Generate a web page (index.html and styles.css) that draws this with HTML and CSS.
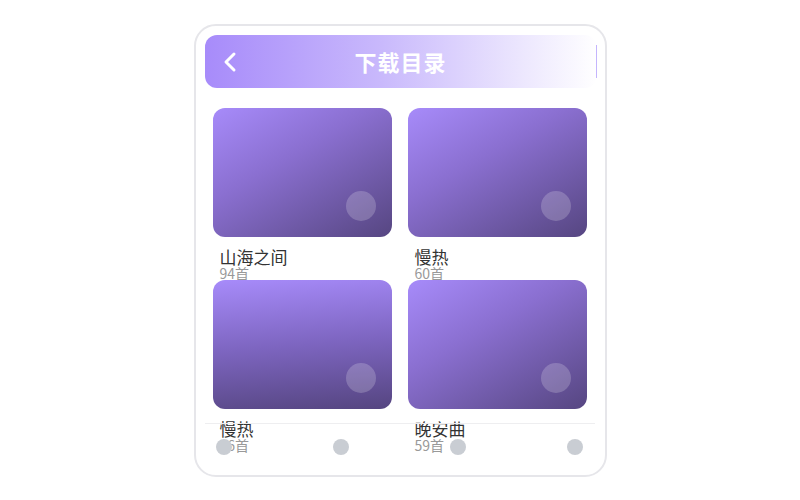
FILE: index.html
```html
<!DOCTYPE html>
<html lang="zh">
<head>
  <meta charset="UTF-8">
  <meta name="viewport" content="width=device-width, initial-scale=1">
  <title>下载目录</title>
  <link rel="stylesheet" href="styles.css">
</head>
<body>

  <div class="phone">
    <div class="header">
      <svg class="back" width="16" height="22" viewBox="0 0 16 22">
        <path d="M12 3 L4 11 L12 19" fill="none" stroke="#fff" stroke-width="3" stroke-linecap="round" stroke-linejoin="round"/>
      </svg>
      <h1>下载目录</h1>
      <span class="edge"></span>
    </div>

    <div class="albums">
      <div class="album">
        <div class="cover"><span class="play"></span></div>
        <div class="name">山海之间</div>
        <div class="count">94首</div>
      </div>
      <div class="album">
        <div class="cover"><span class="play"></span></div>
        <div class="name">慢热</div>
        <div class="count">60首</div>
      </div>
      <div class="album">
        <div class="cover vertical"><span class="play"></span></div>
        <div class="name">慢热</div>
        <div class="count">56首</div>
      </div>
      <div class="album">
        <div class="cover"><span class="play"></span></div>
        <div class="name">晚安曲</div>
        <div class="count">59首</div>
      </div>
    </div>

    <div class="tabbar">
      <span class="dot"></span>
      <span class="dot"></span>
      <span class="dot"></span>
      <span class="dot"></span>
    </div>
  </div>

</body>
</html>
```

FILE: styles.css
```css
body {
  margin: 0;
  height: 100vh;
  display: flex;
  align-items: center;
  justify-content: center;
  background: #fff;
  font-family: "Noto Sans CJK SC", "Noto Sans", sans-serif;
}
.phone {
  position: relative;
  width: 409px;
  height: 449px;
  border: 2px solid #e6e6ea;
  border-radius: 22px;
  overflow: hidden;
  background: #fff;
}
.header {
  position: relative;
  display: flex;
  align-items: center;
  justify-content: center;
  height: 53px;
  margin: 9px 8px 0 9px;
  border-radius: 12px;
  background: linear-gradient(to right, #a78bfa, #c9b9fc 45%, #ffffff);
}
.header h1 {
  margin: 0;
  font-size: 22px;
  font-weight: 700;
  color: #fff;
  letter-spacing: 1px;
}
.back {
  position: absolute;
  left: 17px;
  top: 16px;
}
.edge {
  position: absolute;
  right: 0;
  top: 10px;
  width: 1px;
  height: 33px;
  background: #c4b5fd;
}
.albums {
  display: grid;
  grid-template-columns: 179px 179px;
  grid-auto-rows: 172px;
  column-gap: 16px;
  padding: 20px 17px 0;
}
.cover {
  position: relative;
  height: 129px;
  border-radius: 12px;
  background: linear-gradient(150deg, #a78bfa, #8a6fd0 40%, #564681);
}
.cover.vertical {
  background: linear-gradient(175deg, #a78bfa, #7d65c0 50%, #554580);
}
.play {
  position: absolute;
  right: 16px;
  bottom: 16px;
  width: 30px;
  height: 30px;
  border-radius: 50%;
  background: rgba(255, 255, 255, 0.2);
}
.name {
  margin-top: 10px;
  padding-left: 7px;
  font-size: 17px;
  line-height: 19px;
  color: #333;
}
.count {
  padding-left: 7px;
  font-size: 14px;
  line-height: 14px;
  color: #999;
}
.tabbar {
  position: absolute;
  left: 9px;
  right: 10px;
  bottom: 20px;
  display: flex;
  justify-content: space-between;
  padding: 15px 11px 0;
  border-top: 1px solid #eeeef0;
}
.dot {
  width: 16px;
  height: 16px;
  border-radius: 50%;
  background: #c9cdd3;
}
```
